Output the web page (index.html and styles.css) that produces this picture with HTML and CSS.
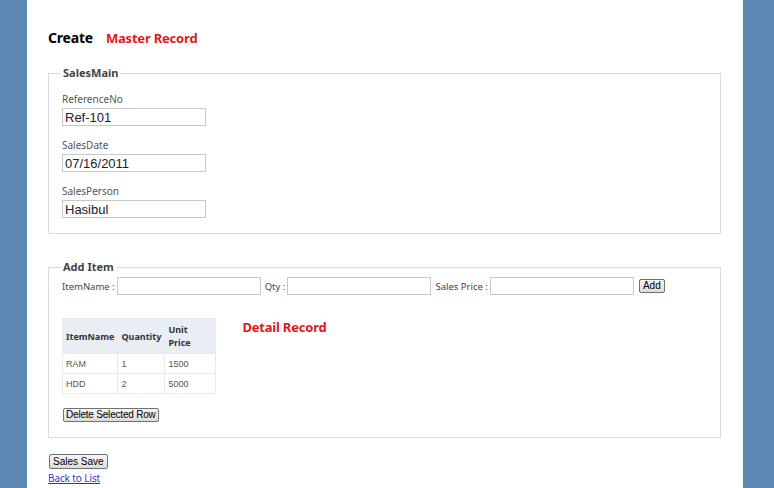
FILE: index.html
```html
<!DOCTYPE html>
<html>
<head>
<meta charset="utf-8">
<link rel="stylesheet" href="styles.css">
</head>
<body>
<div class="page">
  <div class="title-row">
    <h2 class="title">Create</h2>
    <span class="red-note">Master Record</span>
  </div>

  <fieldset class="box box-main">
    <legend>SalesMain</legend>
    <div class="field">
      <label class="lbl">ReferenceNo</label>
      <input class="txt" type="text" value="Ref-101">
    </div>
    <div class="field">
      <label class="lbl">SalesDate</label>
      <input class="txt" type="text" value="07/16/2011">
    </div>
    <div class="field">
      <label class="lbl">SalesPerson</label>
      <input class="txt" type="text" value="Hasibul">
    </div>
  </fieldset>

  <fieldset class="box box-items">
    <legend>Add Item</legend>
    <div class="add-row">
      <span class="lbl-inline">ItemName :</span>
      <input class="txt" type="text">
      <span class="lbl-inline">Qty :</span>
      <input class="txt" type="text">
      <span class="lbl-inline">Sales Price :</span>
      <input class="txt" type="text">
      <button class="btn btn-add">Add</button>
    </div>
    <div class="detail">
      <table class="grid">
        <thead>
          <tr><th class="c1">ItemName</th><th class="c2">Quantity</th><th class="c3">Unit<br>Price</th></tr>
        </thead>
        <tbody>
          <tr><td>RAM</td><td>1</td><td>1500</td></tr>
          <tr><td>HDD</td><td>2</td><td>5000</td></tr>
        </tbody>
      </table>
      <span class="red-note detail-note">Detail Record</span>
    </div>
    <button class="btn btn-del">Delete Selected Row</button>
  </fieldset>

  <div class="footer">
    <button class="btn btn-save">Sales Save</button>
    <a class="back" href="#">Back to List</a>
  </div>
</div>
</body>
</html>
```

FILE: styles.css
```css
html, body {
  margin: 0;
  padding: 0;
  height: 100%;
}
body {
  background: #5c87b2;
  font-family: "Noto Sans", "DejaVu Sans", sans-serif;
  overflow: hidden;
}
.page {
  background: #fff;
  margin-left: 27px;
  width: 673px;
  min-height: 488px;
  padding: 0 22px 0 21px;
  box-sizing: content-box;
}
.title-row {
  display: flex;
  align-items: baseline;
  gap: 13px;
  padding-top: 29px;
  height: 43px;
  box-sizing: border-box;
}
.title {
  margin: 0;
  font-size: 14px;
  font-weight: bold;
  color: #000;
  line-height: 18px;
  letter-spacing: -0.2px;
}
.red-note {
  color: #e01818;
  font-size: 13px;
  font-weight: bold;
  line-height: 18px;
  letter-spacing: -0.2px;
}
.box {
  border: 1px solid #dcdcdc;
  margin: 0;
  padding: 0 13px;
  width: 673px;
  box-sizing: border-box;
}
.box legend {
  font-size: 11px;
  font-weight: bold;
  color: #444;
  padding: 0 2px;
  margin-left: -1px;
  line-height: 14px;
}
.box-main {
  margin-top: 23px;
  height: 168px;
  padding-top: 10px;
}
.field {
  display: flex;
  flex-direction: column;
  align-items: flex-start;
  margin-bottom: 10px;
}
.lbl {
  font-size: 10px;
  color: #555;
  line-height: 14px;
  height: 18px;
  padding-top: 2px;
  box-sizing: border-box;
}
.txt {
  font-family: "Liberation Sans", Arial, sans-serif;
  font-size: 13px;
  color: #222;
  border: 1px solid #c8c8c8;
  padding: 0 2px;
  height: 18px;
  width: 144px;
  box-sizing: border-box;
  margin: 0;
  outline: none;
}
.box-items {
  margin-top: 26px;
  height: 178px;
  padding-top: 0;
}
.add-row {
  display: flex;
  align-items: center;
  height: 18px;
  margin-top: 3px;
}
.lbl-inline {
  font-size: 9.5px;
  color: #444;
  margin-right: 2px;
}
.add-row .txt {
  margin-right: 4px;
}
.btn {
  font-family: "Liberation Sans", Arial, sans-serif;
  font-size: 10px;
  color: #000;
  background: linear-gradient(#f6f6f6, #dcdcdc);
  border: 1px solid #707070;
  border-radius: 2px;
  padding: 0 3px;
  height: 14px;
  line-height: 12px;
  margin: 0;
}
.btn-add {
  margin-left: 1px;
  width: 26px;
  padding: 0;
}
.detail {
  display: flex;
  align-items: flex-start;
  margin-top: 23px;
}
.grid {
  border-collapse: collapse;
  font-size: 9px;
  color: #555;
}
.grid th {
  background: #e8eef4;
  color: #333;
  font-weight: bold;
  text-align: left;
  padding: 0 3px;
  height: 34px;
  line-height: 13px;
  border: 1px solid #e8eef4;
}
.grid td {
  border: 1px solid #eaeaea;
  padding: 0 3px;
  height: 19px;
  font-family: "Liberation Sans", Arial, sans-serif;
}
.grid .c1 { width: 46px; }
.grid .c2 { width: 40px; }
.grid .c3 { width: 44px; }
.detail-note {
  margin-left: 26px;
  margin-top: 0;
}
.btn-del {
  margin-top: 14px;
  margin-left: 1px;
  display: block;
  letter-spacing: -0.2px;
  padding: 0 2px;
}
.footer {
  display: flex;
  flex-direction: column;
  align-items: flex-start;
  padding-top: 16px;
}
.btn-save {
  margin-left: 1px;
  height: 15px;
}
.back {
  font-size: 10px;
  color: #3333cc;
  margin-top: 2px;
  letter-spacing: -0.1px;
}
```
